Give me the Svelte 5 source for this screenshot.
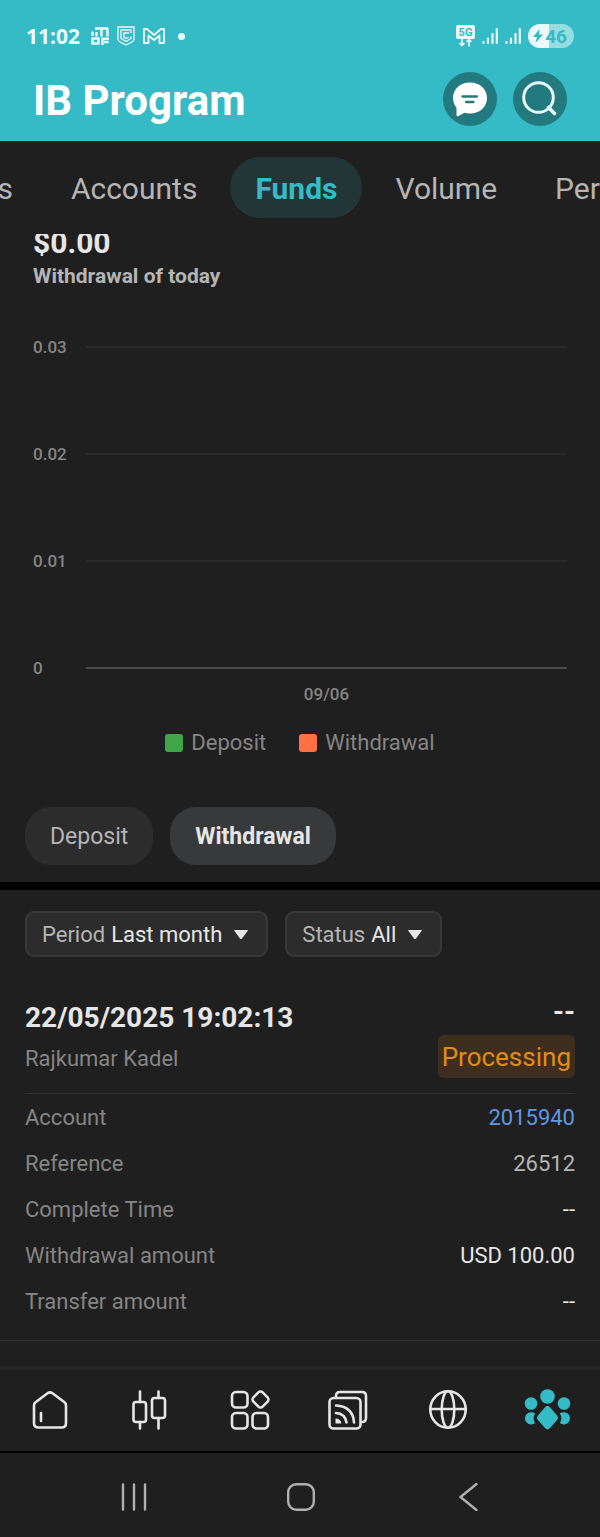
<script lang="ts">
	import { onMount } from "svelte";

	const tabs = ["Clients", "Accounts", "Funds", "Volume", "Performance"];
	const periods = ["Last month", "Last week", "Today"];
	const statuses = ["All", "Processing", "Completed"];
	const ticks = ["0.03", "0.02", "0.01", "0"];
	const rows = [
		{ label: "Account", value: "2015940", kind: "link" },
		{ label: "Reference", value: "26512", kind: "soft" },
		{ label: "Complete Time", value: "--", kind: "" },
		{ label: "Withdrawal amount", value: "USD 100.00", kind: "" },
		{ label: "Transfer amount", value: "--", kind: "" },
	];

	let activeTab = "Funds";
	let type = "Withdrawal";
	let period = periods[0];
	let status = statuses[0];
	let tabBar: HTMLElement;

	// keep the active tab in the middle of the bar
	onMount(() => {
		const el = tabBar.querySelector<HTMLElement>(".active");
		if (el) tabBar.scrollLeft = el.offsetLeft + el.offsetWidth / 2 - tabBar.clientWidth / 2 + 4;
	});
</script>

<div class="app">
	<header>
		<div class="status-bar">
			<div class="status-left">
				<span class="time">11:02</span>
				<svg width="18" height="18" viewBox="0 0 18 18" fill="none" stroke="currentColor" stroke-width="2.400">
					<path d="M1.500 4.500V9M4 1.500h13M5.500 5v4.500M10.500 2v7.500M16.500 1v8.500" />
					<path d="M1.500 11.500h6v5h-6zM11.500 18v-6.200H18M13 15h4.500" />
				</svg>
				<svg width="18" height="20" viewBox="0 0 18 20" fill="none" stroke="currentColor" stroke-width="1.300">
					<path d="M1 1h16v12.500q0 2-8 5.500q-8-3.500-8-5.500z" />
					<path d="M14 7V4H4v8.500l5 3 5-3V10.500M12 7H7v4.500l2 1 2.500-1.500" />
				</svg>
				<svg width="22" height="18" viewBox="0 0 22 18" fill="none" stroke="currentColor" stroke-width="1.800" stroke-linejoin="round">
					<path d="M1 16V2h3l7 6 7-6h3v14h-4.500V8.500L11 13 5.500 8.500V16z" />
				</svg>
				<span class="dot"></span>
			</div>
			<div class="status-right">
				<svg width="19" height="22" viewBox="0 0 19 22">
					<rect width="19" height="14" rx="2" fill="currentColor" />
					<text x="9.500" y="11" text-anchor="middle" class="net">5G</text>
					<path d="M6 14v6.500M3.500 18 6 20.500 8.500 18M13 21.500v-7M10.500 17 13 14.500l2.500 2.500" fill="none" stroke="currentColor" stroke-width="1.600" />
				</svg>
				{#each [1, 2] as sim (sim)}
					<svg width="16" height="18" viewBox="0 0 16 18" stroke="currentColor" stroke-width="2.200" stroke-linecap="round">
						<path d="M1.500 15v1M6 11.500V16M10.500 7v9M14.800 2v14" />
					</svg>
				{/each}
				<span class="battery">
					<svg width="10" height="14" viewBox="0 0 10 14"><path d="M6.500 0 0 8h4L2.500 14 10 5.500H6z" fill="currentColor" /></svg>46
				</span>
			</div>
		</div>
		<div class="title-bar">
			<h1>IB Program</h1>
			<div class="actions">
				<button aria-label="Messages">
					<svg width="54" height="54" viewBox="0 0 54 54">
						<path d="M27 10.500c-10 0-17 6.800-17 15.500 0 4 1.500 7.200 3.500 9.800V43c0 1 1 1.500 2 1l6-3.200c1.800.5 3.500.7 5.500.7 10 0 17-6.800 17-15.500s-7-15.500-17-15.500z" fill="#fff" />
						<path d="M19.500 24.500h14.500M23 30h7.500" stroke="#237a7e" stroke-width="2.300" stroke-linecap="round" />
					</svg>
				</button>
				<button aria-label="Search">
					<svg width="54" height="54" viewBox="0 0 54 54" fill="none" stroke="#e6f9fb" stroke-width="3">
						<circle cx="25.500" cy="25.500" r="14.800" />
						<path d="m35.500 35.500 6 6" stroke-width="3.600" stroke-linecap="round" />
					</svg>
				</button>
			</div>
		</div>
	</header>

	<nav class="tabs" bind:this={tabBar}>
		{#each tabs as tab (tab)}
			<button class:active={tab === activeTab} on:click={() => (activeTab = tab)}>{tab}</button>
		{/each}
	</nav>

	<main>
		<section class="summary">
			<p class="amount">$0.00</p>
			<p class="caption">Withdrawal of today</p>

			<div class="chart">
				{#each ticks as tick (tick)}
					<div class="tick" class:base={tick === "0"}><span>{tick}</span></div>
				{/each}
			</div>
			<div class="x-axis">09/06</div>
			<ul class="legend">
				<li class="deposit">Deposit</li>
				<li class="withdrawal">Withdrawal</li>
			</ul>
		</section>

		<div class="types">
			{#each ["Deposit", "Withdrawal"] as name (name)}
				<button class:active={name === type} on:click={() => (type = name)}>{name}</button>
			{/each}
		</div>

		<div class="filters">
			<label>
				Period
				<select bind:value={period}>
					{#each periods as p (p)}<option>{p}</option>{/each}
				</select>
				<svg width="14" height="9" viewBox="0 0 14 9"><path d="M.8 0h12.400q1.200 0 .4 1L8 8.400q-1 1.100-2 0L.4 1Q-.4 0 .8 0z" fill="currentColor" /></svg>
			</label>
			<label>
				Status
				<select bind:value={status}>
					{#each statuses as s (s)}<option>{s}</option>{/each}
				</select>
				<svg width="14" height="9" viewBox="0 0 14 9"><path d="M.8 0h12.400q1.200 0 .4 1L8 8.400q-1 1.100-2 0L.4 1Q-.4 0 .8 0z" fill="currentColor" /></svg>
			</label>
		</div>

		<article>
			<div class="record">
				<div>
					<h2>22/05/2025 19:02:13</h2>
					<p class="name">Rajkumar Kadel</p>
				</div>
				<div class="state">
					<strong>--</strong>
					<span class="badge">Processing</span>
				</div>
			</div>
			<dl>
				{#each rows as row (row.label)}
					<div>
						<dt>{row.label}</dt>
						<dd class={row.kind}>
							{#if row.kind === "link"}<a href="#account">{row.value}</a>{:else}{row.value}{/if}
						</dd>
					</div>
				{/each}
			</dl>
		</article>
	</main>

	<nav class="bottom-nav">
		<a href="#home" aria-label="Home">
			<svg viewBox="0 0 48 48">
				<path d="M8 19.500q0-2 1.600-3.200L21.500 7.200q2.500-1.800 5 0l12 9.100q1.500 1.200 1.500 3.200V37q0 4.500-4.500 4.500h-23Q8 41.500 8 37z" />
				<path d="M15 27v8" />
			</svg>
		</a>
		<a href="#trade" aria-label="Trade">
			<svg viewBox="0 0 48 48">
				<rect x="7.500" y="16" width="12.500" height="20" rx="2.500" />
				<rect x="26" y="12" width="13" height="20" rx="2.500" />
				<path d="M14 5.500V16M14 36v6.500M32.500 5.500V12M32.500 32v10.500" />
			</svg>
		</a>
		<a href="#apps" aria-label="Apps">
			<svg viewBox="0 0 48 48">
				<rect x="6" y="6" width="15.500" height="15.500" rx="4" />
				<rect x="6" y="27" width="15.500" height="15.500" rx="4" />
				<rect x="26.500" y="27" width="15.500" height="15.500" rx="4" />
				<rect x="28" y="7" width="13" height="13" rx="3" transform="rotate(45 34.500 13.500)" />
			</svg>
		</a>
		<a href="#news" aria-label="News">
			<svg viewBox="0 0 48 48">
				<rect x="3.500" y="12" width="31" height="30.500" rx="4" />
				<path d="M10 12V10q0-4 4-4h22q4 0 4 4v22q0 4-4 4" />
				<path d="M10 19.500q17 1 18 17M10 27q9 .5 10.500 9.500" />
				<path class="solid" d="M9.500 32.500q5 0 6 5h-6z" />
			</svg>
		</a>
		<a href="#discover" aria-label="Discover">
			<svg viewBox="0 0 48 48">
				<ellipse cx="22" cy="23.500" rx="17.700" ry="18.200" />
				<ellipse cx="22" cy="23.500" rx="6.300" ry="18.200" />
				<path d="M4.500 23h35" />
			</svg>
		</a>
		<a href="#ib" class="current" aria-label="IB Program">
			<svg viewBox="0 0 48 48">
				<circle cx="21.500" cy="10.500" r="7.300" />
				<circle cx="5" cy="17.500" r="6.300" />
				<circle cx="38" cy="17.500" r="6.300" />
				<path d="M9.200 27.600a6.200 6.200 0 1 0 0 9.500q-3.200-4.700 0-9.500zM33.800 27.600a6.200 6.200 0 1 1 0 9.500q3.200-4.700 0-9.500z" />
				<path d="M19 21.300q2.500-3 5 0l7.300 8.400q1.500 2 0 4L24 42q-2.500 2.800-5 0l-7.300-8.300q-1.500-2 0-4z" />
			</svg>
		</a>
	</nav>

	<div class="system-nav">
		<button aria-label="Recent apps">
			<svg width="28" height="28" viewBox="0 0 28 28"><path d="M3 1.500v25M14 1.500v25M25 1.500v25" /></svg>
		</button>
		<button aria-label="Home screen">
			<svg width="28" height="28" viewBox="0 0 28 28"><rect x="1.200" y="1.200" width="25.600" height="25.600" rx="8" /></svg>
		</button>
		<button aria-label="Back">
			<svg width="28" height="28" viewBox="0 0 28 28"><path d="M22.500 1 6.500 14l16 13" /></svg>
		</button>
	</div>
</div>

<style>
	:global(body) {
		margin: 0;
		background: #1f1f1f;
	}

	.app {
		display: flex;
		flex-direction: column;
		min-height: 100vh;
		background: #1f1f1f;
		color: #e6e6e6;
		font-family: Roboto, "Liberation Sans", sans-serif;
		font-size: 22px;
		overflow: hidden;
	}

	button,
	select {
		border: 0;
		padding: 0;
		background: none;
		color: inherit;
		font: inherit;
		cursor: pointer;
	}

	a {
		color: inherit;
		text-decoration: none;
	}

	h1,
	h2,
	p,
	ul,
	dl,
	dd {
		margin: 0;
		padding: 0;
	}

	svg {
		display: block;
		flex: none;
	}

	/* header */
	header {
		padding-bottom: 15px;
		background: #35bbc5;
		color: #fff;
	}

	.status-bar {
		display: flex;
		justify-content: space-between;
		align-items: center;
		height: 72px;
		padding: 0 26px;
		box-sizing: border-box;
		color: #eafafb;
	}

	.status-left,
	.status-right {
		display: flex;
		align-items: center;
		gap: 8px;
	}

	.status-right {
		gap: 7px;
	}

	.time {
		margin-right: 3px;
		font-family: "Open Sans", sans-serif;
		font-size: 21px;
		font-weight: 700;
		line-height: 28px;
	}

	.dot {
		width: 7px;
		height: 7px;
		margin-left: 5px;
		border-radius: 50%;
		background: currentColor;
	}

	.net {
		fill: #35bbc5;
		font-family: Roboto, sans-serif;
		font-size: 11px;
		font-weight: 700;
	}

	.battery {
		display: flex;
		align-items: center;
		gap: 2px;
		height: 24px;
		padding: 0 7px 0 5px;
		border-radius: 12px;
		background: linear-gradient(90deg, #eafafb 46%, #96dde2 46%);
		color: #35bbc5;
		font-size: 19px;
		font-weight: 700;
	}

	.title-bar {
		display: flex;
		justify-content: space-between;
		align-items: center;
		padding: 0 33px;
	}

	h1 {
		font-size: 42px;
		line-height: 54px;
		font-weight: 700;
		padding-top: 2px;
		margin-bottom: -2px;
	}

	.actions {
		display: flex;
		gap: 16px;
	}

	.actions button {
		border-radius: 50%;
		background: #237a7e;
	}

	/* tabs */
	.tabs {
		position: relative;
		display: flex;
		gap: 8px;
		padding: 16px 25px;
		overflow-x: auto;
		scrollbar-width: none;
	}

	.tabs button {
		flex: none;
		padding: 2px 25px 0;
		border-radius: 31px;
		color: #b5b5b5;
		font-size: 30px;
		line-height: 59px;
	}

	.tabs .active {
		background: #233637;
		color: #35bbc5;
		font-weight: 700;
	}

	main {
		flex: 1;
	}

	/* daily summary, partly scrolled under the tabs */
	.summary {
		padding: 0 33px;
		overflow: hidden;
	}

	.amount {
		margin-top: -10px;
		font-size: 30px;
		line-height: 38px;
		font-weight: 700;
	}

	.caption {
		color: #b5b5b5;
		font-size: 21px;
		line-height: 28px;
		font-weight: 700;
	}

	.chart {
		display: grid;
		gap: 79px;
		margin-top: 43px;
	}

	.tick {
		display: flex;
		align-items: center;
		color: #858585;
		font-size: 17px;
		line-height: 28px;
		font-weight: 500;
	}

	.tick span {
		width: 53px;
	}

	.tick::after {
		content: "";
		flex: 1;
		height: 2px;
		background: #292929;
	}

	.tick.base::after {
		background: #494949;
	}

	.x-axis {
		margin-top: 1px;
		padding-left: 53px;
		color: #858585;
		font-size: 17px;
		line-height: 22px;
		font-weight: 500;
		text-align: center;
	}

	.legend {
		display: flex;
		justify-content: center;
		gap: 33px;
		margin-top: 24px;
		color: #858585;
		line-height: 28px;
		list-style: none;
	}

	.legend li {
		display: flex;
		align-items: center;
		gap: 8px;
	}

	.legend li::before {
		content: "";
		width: 18px;
		height: 18px;
		border-radius: 3px;
		background: #3fa648;
	}

	.legend .withdrawal::before {
		background: #ff7043;
	}

	.types {
		display: flex;
		gap: 17px;
		padding: 50px 25px 17px;
		border-bottom: 8px solid #000;
	}

	.types button {
		padding: 2px 25px 0;
		border-radius: 26px;
		background: #2c2c2c;
		color: #b5b5b5;
		font-size: 23px;
		line-height: 56px;
	}

	.types .active {
		background: #38393b;
		color: #e6e6e6;
		font-weight: 700;
	}

	/* filters */
	.filters {
		display: flex;
		gap: 17px;
		padding: 21px 25px;
	}

	.filters label {
		display: flex;
		align-items: center;
		gap: 6px;
		height: 46px;
		padding: 1px 18px 0 15px;
		box-sizing: border-box;
		border: 2px solid #383838;
		border-radius: 9px;
		background: #2c2c2c;
		color: #b5b5b5;
	}

	.filters select {
		appearance: none;
		field-sizing: content;
		margin-right: 6px;
		color: #e6e6e6;
	}

	.filters option {
		background: #2c2c2c;
	}

	.filters svg {
		color: #e6e6e6;
	}

	/* record */
	article {
		padding: 17px 0 15px;
		border-bottom: 1px solid #303030;
	}

	.record {
		display: flex;
		justify-content: space-between;
		margin: 0 25px;
		padding-bottom: 15px;
		border-bottom: 1px solid #303030;
	}

	h2 {
		padding-top: 7px;
		font-size: 28px;
		line-height: 32px;
		font-weight: 700;
	}

	.name {
		padding-top: 11px;
		color: #858585;
		line-height: 28px;
	}

	.state {
		display: flex;
		flex-direction: column;
		align-items: flex-end;
	}

	.state strong {
		padding-bottom: 6px;
		font-size: 28px;
		line-height: 34px;
	}

	.badge {
		padding: 2px 4px 0;
		border-radius: 6px;
		background: #3d2e1e;
		color: #e08d18;
		font-size: 26px;
		line-height: 41px;
	}

	dl {
		padding: 1px 25px 0;
	}

	dl div {
		display: flex;
		justify-content: space-between;
		line-height: 46px;
	}

	dt {
		color: #858585;
	}

	dd.soft {
		color: #b5b5b5;
	}

	dd.link {
		color: #5f97e3;
	}

	/* bottom navigation */
	.bottom-nav {
		display: grid;
		grid-template-columns: repeat(6, 1fr);
		place-items: center;
		height: 82px;
		margin-top: 26px;
		border-top: 2px solid #2a2a2a;
		border-bottom: 2px solid #000;
	}

	.bottom-nav svg {
		width: 48px;
		height: 48px;
		overflow: visible;
		fill: none;
		stroke: #e6e6e6;
		stroke-width: 2.6;
		stroke-linecap: round;
		stroke-linejoin: round;
	}

	.bottom-nav .solid {
		fill: #e6e6e6;
		stroke: none;
	}

	.bottom-nav .current svg {
		fill: #35bbc5;
		stroke: none;
	}

	.system-nav {
		display: grid;
		grid-template-columns: repeat(3, 1fr);
		place-items: center;
		height: 84px;
		padding: 4px 48px 0 50px;
		box-sizing: border-box;
	}

	.system-nav svg {
		fill: none;
		stroke: #b0b0b0;
		stroke-width: 2.4;
		stroke-linecap: round;
		stroke-linejoin: round;
	}
</style>
